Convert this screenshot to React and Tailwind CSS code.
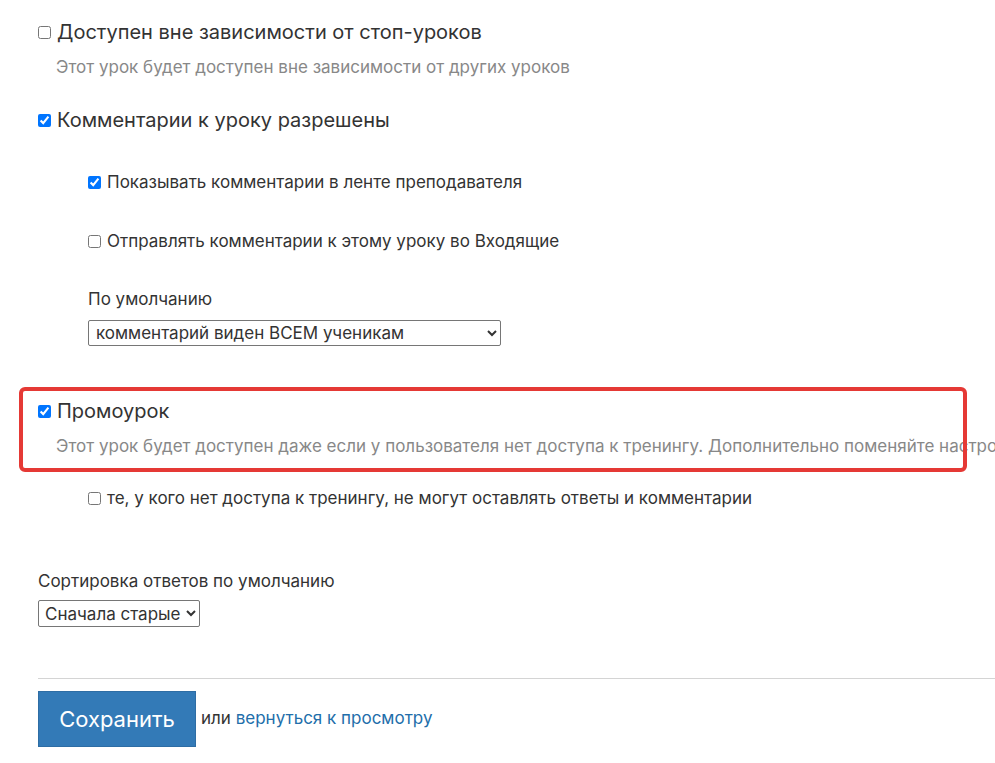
import React from 'react';

const font = { fontFamily: 'Inter, "Noto Sans", sans-serif' };

function Check({ checked, label, big }) {
  return (
    <label className={`flex items-center whitespace-nowrap ${big ? 'text-[20px] leading-[28px]' : 'text-[17px] leading-[24px]'}`}>
      <input type="checkbox" defaultChecked={checked} className="m-0 mr-[6px] h-[13px] w-[13px] shrink-0" />
      <span>{label}</span>
    </label>
  );
}

export default function App() {
  return (
    <div className="relative h-[763px] w-[995px] overflow-hidden bg-white text-[#333]" style={font}>
      <div className="pl-[38px] pt-[18px]">
        <Check big label="Доступен вне зависимости от стоп-уроков" />
        <p className="mt-[9px] pl-[18px] text-[17px] leading-[24px] text-[#888] whitespace-nowrap">
          Этот урок будет доступен вне зависимости от других уроков
        </p>

        <div className="mt-[27px]">
          <Check big checked label="Комментарии к уроку разрешены" />
        </div>

        <div className="pl-[50px]">
          <div className="mt-[36px]">
            <Check checked label="Показывать комментарии в ленте преподавателя" />
          </div>
          <div className="mt-[35px]">
            <Check label="Отправлять комментарии к этому уроку во Входящие" />
          </div>
          <div className="mt-[34px] text-[17px] leading-[24px]">По умолчанию</div>
          <select className="mt-[9px] h-[26px] w-[413px] rounded-[2px] border border-[#767676] px-[3px] text-[17px]">
            <option>комментарий виден ВСЕМ ученикам</option>
          </select>
        </div>

        <div className="mt-[51px]">
          <Check big checked label="Промоурок" />
        </div>
        <p className="mt-[9px] pl-[18px] text-[17px] leading-[24px] text-[#888] whitespace-nowrap">
          Этот урок будет доступен даже если у пользователя нет доступа к тренингу. Дополнительно поменяйте настройки тренинга
        </p>

        <div className="mt-[28px] pl-[50px]">
          <Check label="те, у кого нет доступа к тренингу, не могут оставлять ответы и комментарии" />
        </div>

        <div className="mt-[59px] text-[17px] leading-[24px]">Сортировка ответов по умолчанию</div>
        <select className="mt-[7px] h-[27px] rounded-[2px] border border-[#767676] px-[2px] text-[17px]">
          <option>Сначала старые</option>
        </select>

        <div className="mt-[51px] border-t border-[#d4d4d4]" />

        <div className="mt-[12px] flex items-center">
          <button className="h-[56px] w-[158px] border border-[#2e6da4] bg-[#337ab7] text-[22px] text-white">
            Сохранить
          </button>
          <span className="ml-[5px] text-[17px]">
            или <a href="#" className="text-[#226eaa]">вернуться к просмотру</a>
          </span>
        </div>
      </div>

      <div className="pointer-events-none absolute left-[19px] top-[387px] h-[85px] w-[948px] rounded-[6px] border-[4px] border-[#e53935]" />
    </div>
  );
}
